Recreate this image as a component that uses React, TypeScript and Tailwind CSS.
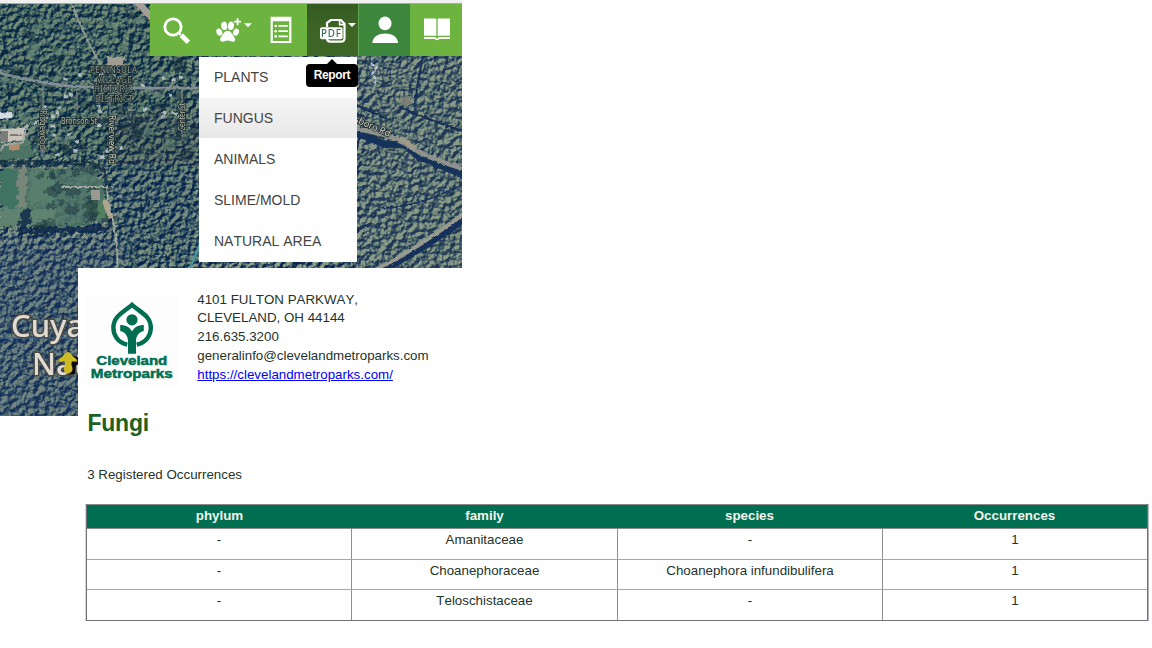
import React from "react";

const menuItems = ["PLANTS", "FUNGUS", "ANIMALS", "SLIME/MOLD", "NATURAL AREA"];
const columns = ["phylum", "family", "species", "Occurrences"];
const rows = [
  ["-", "Amanitaceae", "-", "1"],
  ["-", "Choanephoraceae", "Choanephora infundibulifera", "1"],
  ["-", "Teloschistaceae", "-", "1"],
];

// Deterministic scatter used for houses and clearings in the village.
function scatter(count: number, x: number, y: number, w: number, h: number, seed: number) {
  let s = seed;
  const next = () => {
    s = (s * 16807) % 2147483647;
    return s / 2147483647;
  };
  return Array.from({ length: count }, () => ({ x: x + next() * w, y: y + next() * h, r: next() }));
}

const houses = [...scatter(52, 25, 66, 165, 60, 7731), ...scatter(16, 35, 116, 95, 45, 51200)];
const clearings = [...scatter(20, 30, 20, 110, 50, 9177), ...scatter(34, 0, 75, 190, 75, 34521)];
const groves = [...scatter(46, 0, 10, 196, 150, 23019), ...scatter(26, 40, 165, 70, 68, 88123)];

function AerialMap() {
  return (
    <svg className="absolute left-0 top-1" width="462" height="412" viewBox="0 4 462 412">
      <defs>
        <filter id="forest" x="0" y="0" width="100%" height="100%" colorInterpolationFilters="sRGB">
          <feTurbulence type="fractalNoise" baseFrequency="0.19" numOctaves="5" seed="8" />
          <feDiffuseLighting surfaceScale="5.5" diffuseConstant="1.04" lightingColor="#fff">
            <feDistantLight azimuth="230" elevation="45" />
          </feDiffuseLighting>
          <feComponentTransfer>
            <feFuncR type="table" tableValues=".04 .09 .18 .27 .40 .58" />
            <feFuncG type="table" tableValues=".14 .20 .29 .38 .49 .64" />
            <feFuncB type="table" tableValues=".30 .33 .38 .42 .46 .55" />
          </feComponentTransfer>
        </filter>
        <filter id="grain" x="0" y="0" width="100%" height="100%" colorInterpolationFilters="sRGB">
          <feTurbulence type="fractalNoise" baseFrequency="0.2" numOctaves="3" seed="21" result="n" />
          <feDisplacementMap in="SourceGraphic" in2="n" scale="10" xChannelSelector="R" yChannelSelector="G" />
          <feGaussianBlur stdDeviation="0.6" />
        </filter>
        <filter id="rough" filterUnits="userSpaceOnUse" x="0" y="0" width="462" height="416" colorInterpolationFilters="sRGB">
          <feTurbulence type="fractalNoise" baseFrequency="0.3" numOctaves="2" seed="4" result="n" />
          <feDisplacementMap in="SourceGraphic" in2="n" scale="3" xChannelSelector="R" yChannelSelector="G" />
          <feGaussianBlur stdDeviation="0.35" />
        </filter>
        <filter id="shade" x="-20%" y="-20%" width="140%" height="140%">
          <feGaussianBlur stdDeviation="9" />
        </filter>
      </defs>
      <rect y="4" width="462" height="412" filter="url(#forest)" />
      <g filter="url(#shade)">
        <path d="M-20 -10H200V165H-20Z" fill="#17302a" opacity=".2" />
        <path d="M110 110H200V270H110Z" fill="#12304c" opacity=".16" />
        <path d="M-20 240H120V440H-20Z" fill="#2a4a72" opacity=".3" />
        <path d="M357 56H480V280H357Z" fill="#748278" opacity=".2" />
      </g>
      <g filter="url(#grain)">
        <path d="M0 168H92L108 188V222L62 228 0 226Z" fill="#4f7568" opacity=".88" />
        <path d="M0 168H17V208H0Z" fill="#417362" />
        <path d="M19 168H26V208H17Z" fill="#768678" />
        <path d="M31 170H55V204H29Z" fill="#587f6d" />
        <path d="M0 209H52L58 226H0Z" fill="#5f836f" />
        <path d="M82 202 104 199 108 216 92 220Z" fill="#548062" />
        <path d="M0 142 28 137 34 157 0 160Z" fill="#4c7363" />
        {clearings.map((p, i) => (
          <ellipse key={i} cx={p.x} cy={p.y} rx={2 + p.r * 4} ry={2 + p.r * 2.5} fill="#628472" opacity=".55" />
        ))}
        {groves.map((p, i) => (
          <ellipse key={i} cx={p.x} cy={p.y} rx={3 + p.r * 5} ry={3 + p.r * 3} fill="#142d3c" opacity=".45" />
        ))}
        <path d="M22 210 32 208 28 230 60 226 108 226V233H22L18 228Z" fill="#102c4c" opacity=".85" />
        <path d="M0 163H95L105 172 108 192" fill="none" stroke="#163246" strokeWidth="4" opacity=".8" />
      </g>
      <g filter="url(#rough)">
        {houses.map((p, i) => (
          <rect
            key={i}
            x={p.x}
            y={p.y}
            width={1.8 + p.r * 2.5}
            height={1.8 + p.r * 1.8}
            fill={p.r > 0.4 ? "#c3c9cf" : "#968c8e"}
            opacity=".85"
          />
        ))}
      </g>
      <g fill="none" strokeLinecap="round" filter="url(#rough)">
        <path d="M0 73Q30 81 60 85T197 88" stroke="#838f94" strokeWidth="2.8" />
        <path d="M72 4Q86 42 103 68" stroke="#919b96" strokeWidth="2" />
        <path d="M43 86V156M77 88V110M110 94V114M182 88V136" stroke="#79817f" strokeWidth="1.4" />
        <path d="M62 187H107L108 201Q119 238 117 266" stroke="#a7aba3" strokeWidth="1.8" />
        <path d="M105 202 110 216" stroke="#afa78d" strokeWidth="5" />
        <path d="M0 168H68" stroke="#89927e" strokeWidth="1" />
        <path d="M139 4 151 17" stroke="#a59d98" strokeWidth="7" />
        <path d="M354 132 385 144 405 145 419 157 462 174" stroke="#15325a" strokeWidth="7" />
        <path d="M354 128 385 135Q400 140 414 149T464 169" stroke="#8f928c" strokeWidth="4.5" />
        <path d="M402 139 413 147" stroke="#a19c8a" strokeWidth="5" />
        <path d="M400 107Q425 119 463 131M423 56Q418 80 415 102M356 105 390 120" stroke="#152f57" strokeWidth="2" />
        <path d="M383 270Q420 251 463 221" stroke="#15305a" strokeWidth="6" />
        <path d="M374 271Q420 247 463 214" stroke="#979a8e" strokeWidth="4" />
        <path d="M382 208Q420 207 463 184" stroke="#18335b" strokeWidth="1.6" />
      </g>
      <g fill="none">
        <path d="M0 338H78" stroke="#3d638f" strokeWidth="2" opacity=".65" />
        <path
          d="M134 268Q132 255 147 250 154 236 166 241 173 248 169 268M146 268Q149 252 166 256"
          stroke="#a3ad69"
          strokeDasharray="2 2"
          opacity=".8"
        />
        <path d="M190 268 200 244" stroke="#4796a0" strokeWidth="2.5" />
      </g>
      <g filter="url(#rough)">
        <ellipse cx="406" cy="101" rx="6.5" ry="4.5" fill="#858575" opacity=".85" />
        <path d="M371 64 377 67 372 74 377 80 373 84" fill="none" stroke="#bdc9de" strokeWidth="2" strokeDasharray="4 2" />
        <path d="M107 57H125L122 66H108Z" fill="#a09d95" />
        <path d="M0 129 24 128 25 140 0 143Z" fill="#c8c4bc" />
        <path d="M0 131H8V142H0ZM10 134H22V136H10Z" fill="#7d7c7b" />
        <path d="M0 113 12 112 13 118 0 119Z" fill="#d4dbe2" />
        <path d="M24 128 28 124 22 143 4 145 0 151" fill="none" stroke="#a5aaa5" strokeWidth="2" />
        <path d="M9 145 20 144 19 150 9 150Z" fill="#ad8d6d" />
        <path d="M91 190H100V200H91Z" fill="#9b9990" />
      </g>
      <g
        fontFamily="'Noto Sans', sans-serif"
        stroke="#1c2927"
        strokeWidth="1.6"
        paintOrder="stroke"
        fill="#b3b8af"
        fontSize="8"
      >
        <text x="90" y="73" textLength="47" fill="#8a9294">PENINSULA</text>
        <text x="97" y="83" textLength="35" fill="#8a9294">VILLAGE</text>
        <text x="94" y="92" textLength="39" fill="#8a9294">HISTORIC</text>
        <text x="95" y="102" textLength="38" fill="#8a9294">DISTRICT</text>
        <text x="61" y="124" textLength="36" lengthAdjust="spacingAndGlyphs">Bronson St</text>
        <text transform="translate(40 110) rotate(90)" textLength="39" lengthAdjust="spacingAndGlyphs">Ridgewood</text>
        <text transform="translate(108.5 115) rotate(90)" textLength="49" lengthAdjust="spacingAndGlyphs" fontSize="9" fill="#cfd2c8">
          Riverview Rd
        </text>
        <text transform="translate(185 131) rotate(-90)" textLength="28" lengthAdjust="spacingAndGlyphs">Center St</text>
        <text transform="translate(344 117) rotate(24)" textLength="49" lengthAdjust="spacingAndGlyphs" fontSize="9.5" fill="#d2d3c9">
          nesboro Rd
        </text>
      </g>
      <g
        fontFamily="'Noto Sans', sans-serif"
        fontSize="31"
        fontWeight="500"
        fill="#e0dbd3"
        stroke="#4c4b43"
        strokeWidth="3"
        paintOrder="stroke"
      >
        <text x="11" y="337">Cuyahoga</text>
        <text x="32" y="375">National</text>
      </g>
      <path d="M66 370 69 375 75 374 75.5 366 80 363V358L72 355Z" fill="#090b0d" />
      <path
        d="M58 361.5Q58.5 358.5 61.5 357.3L65.5 353.2Q67.7 350.8 70 353.2L74 357.3Q77 358.5 77.5 361.5ZM64.6 361H71.8L71.4 365Q73.4 368.5 71.8 371.5 68 375.8 64.2 371.5 63 368.5 65 365Z"
        fill="#cdbb25"
      />
    </svg>
  );
}

const Caret = ({ x, y }: { x: number; y: number }) => <path d={`M${x} ${y}h8l-4 4z`} fill="#fff" />;

function Toolbar() {
  const svg = "block h-[52px] w-[52px]";
  return (
    <nav className="flex h-[52px] w-[312px]">
      <button className="bg-[#6cb33f]">
        <svg className={svg} viewBox="0 0 52 52">
          <circle cx="23" cy="23" r="8.2" fill="none" stroke="#fff" strokeWidth="2.8" />
          <path d="m28.9 29 2 2" stroke="#fff" strokeWidth="2" />
          <path d="m31.3 31.3 7.1 7" stroke="#fff" strokeWidth="4.8" />
        </svg>
      </button>
      <button className="bg-[#6cb33f]">
        <svg className={svg} viewBox="0 0 52 52">
          <path d="M.5 0V52" stroke="#68ad3d" />
          <g fill="#fff">
            <ellipse cx="17.3" cy="28.2" rx="2.8" ry="3.7" transform="rotate(-25 17.3 28.2)" />
            <ellipse cx="22.2" cy="21.8" rx="3" ry="4.2" transform="rotate(-8 22.2 21.8)" />
            <ellipse cx="29" cy="21.8" rx="3" ry="4.2" transform="rotate(8 29 21.8)" />
            <ellipse cx="34" cy="28.2" rx="2.8" ry="3.7" transform="rotate(25 34 28.2)" />
            <path d="M25.6 26.8C29.2 26.8 30.8 31 32.3 33.2 34.9 37.5 31 38.3 28.8 37.3 26.6 36.3 24.6 36.3 22.4 37.3 20 38.3 16.5 37 19 33.3 20.5 31 22 26.8 25.6 26.8Z" />
          </g>
          <path d="M35.6 14.2v7M32.1 17.7h7" stroke="#fff" strokeWidth="1.8" />
          <Caret x={42} y={19.2} />
        </svg>
      </button>
      <button className="bg-[#6cb33f]">
        <svg className={svg} viewBox="0 0 52 52">
          <path fill="#fff" fillRule="evenodd" d="M16.6 12.8H37.4V39H16.6ZM18.8 17.2V37H35.2V17.2Z" />
          <g fill="#fff">
            <circle cx="21.7" cy="22" r="1.3" />
            <circle cx="21.7" cy="27.2" r="1.3" />
            <circle cx="21.7" cy="32.4" r="1.3" />
            <path d="M24.4 21h9.4v1.8h-9.4zM24.4 26.2h9.4V28h-9.4zM24.4 31.4h9.4v1.8h-9.4z" />
          </g>
        </svg>
      </button>
      <button className="bg-linear-to-b from-[#355a22] via-[#3d6626] to-[#3d6626]">
        <svg className={svg} viewBox="0 0 52 52">
          <path d="M.5 0V52" stroke="#6cb33f" />
          <path
            d="M21 23v-4.2L24.8 16H34.8L38.5 19.6V34Q38.5 37.7 35 37.7H24.3Q21 37.7 21 34.3"
            fill="none"
            stroke="#fff"
            strokeWidth="2.2"
          />
          <path d="M33.6 15.4V20.6H39" fill="none" stroke="#fff" strokeWidth="1.6" />
          <rect x="14" y="23.3" width="22.6" height="12" rx="1.8" fill="#fff" />
          <text x="15" y="33" fontFamily="'Noto Sans', sans-serif" fontSize="9.8" fontWeight="500" textLength="20" fill="#3d6a5a">
            PDF
          </text>
          <Caret x={42} y={19} />
        </svg>
      </button>
      <button className="bg-[#3c873b]">
        <svg className={svg} viewBox="0 0 52 52">
          <path d="M.5 0V52" stroke="#62a552" />
          <ellipse cx="27" cy="19.4" rx="6.5" ry="6.9" fill="#fff" />
          <path d="M14.2 39C15 32.5 20.5 29.6 27.2 29.6S39.2 32.5 40.2 39Z" fill="#fff" />
        </svg>
      </button>
      <button className="bg-[#6cb33f]">
        <svg className={svg} viewBox="0 0 52 52">
          <path d="M14 14.4H25.5L26.3 15V31.8H14ZM27.7 15 28.5 14.4H40V31.8H27.7Z" fill="#fff" />
          <path d="M14 34H24.8Q27 36.7 29.2 34H40" fill="none" stroke="#fff" strokeWidth="1.8" />
          <path d="M26.3 15H27.7V32H26.3Z" fill="#a5d07e" />
        </svg>
      </button>
    </nav>
  );
}

function Logo() {
  return (
    <svg className="block h-[92px] w-[92px] bg-[#fdfdfd]" viewBox="86 295 92 92">
      <path
        d="M127.3 344.6C118 342.5 113.4 335.5 113.4 327.8 113.4 316 123.5 312.5 132 304.8 140.5 312.5 150.8 316 150.8 327.8 150.8 335.5 146 342.5 136.7 344.6"
        fill="none"
        stroke="#006f51"
        strokeWidth="4.4"
      />
      <circle cx="132" cy="319.8" r="5.6" fill="#006f51" />
      <path
        d="M120.2 325C126 325 130.3 327.6 132 331.6 133.7 327.6 138 325 143.8 325V331C139 332 136 336 136 341V353.7H128V341C128 336 125 332 120.2 331Z"
        fill="#006f51"
      />
      <g
        fontFamily="'Liberation Sans', Arial, sans-serif"
        fontWeight="700"
        fontSize="13.2"
        fill="#006f51"
        stroke="#006f51"
        strokeWidth=".5"
      >
        <text x="96.3" y="365.3" textLength="71" lengthAdjust="spacingAndGlyphs">Cleveland</text>
        <text x="90.8" y="378.1" textLength="82" lengthAdjust="spacingAndGlyphs">Metroparks</text>
      </g>
    </svg>
  );
}

export default function App() {
  return (
    <div className="relative h-[648px] w-[1152px] overflow-hidden bg-white font-['Liberation_Sans',Arial,sans-serif]">
      <AerialMap />
      <div className="relative flex h-[268px] w-[462px] flex-col">
        <div className="h-1 shrink-0 border-b border-[#aaa] bg-[#f0f0f0]" />
        <div className="flex justify-end">
          <Toolbar />
        </div>
        <div className="ml-[199px] mt-px h-[205px] w-[158px] bg-white text-[14px] text-[#444] [font-kerning:none]">
          {menuItems.map((item) => (
            <div
              key={item}
              className={
                item === "FUNGUS"
                  ? "flex h-[41px] items-center border-b border-white bg-linear-to-b from-[#f5f5f5] to-[#e8e8e8] bg-clip-padding pl-[15px]"
                  : "flex h-[41px] items-center pl-[15px]"
              }
            >
              {item}
            </div>
          ))}
        </div>
        <div className="absolute left-[306px] top-[59px] flex w-[52px] flex-col items-center">
          <div className="h-0 w-0 border-x-[5px] border-b-[5px] border-x-transparent border-b-black" />
          <div className="flex h-[23px] w-full items-center justify-center rounded bg-black pb-[2px] text-[12px] font-bold tracking-[-0.35px] text-white">
            Report
          </div>
        </div>
      </div>

      <main className="relative ml-[78px] h-[380px] bg-white text-[13.33px] text-[#24332a] [font-kerning:none]">
        <header className="flex pl-2 pt-[27px]">
          <Logo />
          <address className="ml-[19.3px] -mt-[4.3px] text-[13.33px] not-italic leading-[18.75px]">
            <div>4101 FULTON PARKWAY,</div>
            <div>CLEVELAND, OH 44144</div>
            <div>216.635.3200</div>
            <div>generalinfo@clevelandmetroparks.com</div>
            <a className="text-[#0000ff] underline" href="#site">https://clevelandmetroparks.com/</a>
          </address>
        </header>
        <h1 className="ml-[9.4px] mt-[22px] text-[23px] font-bold leading-[28px] tracking-[-0.2px] text-[#21611f]">Fungi</h1>
        <p className="ml-[9.2px] mt-[29px] leading-[18px]">3 Registered Occurrences</p>
        <section className="ml-2 mt-[20px] w-[1062px] border-x border-b border-[#71717b] shadow-[-1px_0_0_#d4d4da,1px_0_0_#b4b4be]">
          <div className="grid h-[25px] grid-cols-4 border-y border-[#8a8a8a] bg-[#006f51] text-center font-bold leading-[22px] text-[#f2f5ee]">
            {columns.map((c) => (
              <div key={c}>{c}</div>
            ))}
          </div>
          {rows.map((row, i) => (
            <div
              key={i}
              className="grid h-[30.5px] grid-cols-[265px_266px_265px_264px] divide-x divide-[#8f8f8f] border-b border-[#a5a5a5] text-center leading-[22px] last:h-[30px] last:border-b-0"
            >
              {row.map((cell, j) => (
                <div key={j}>{cell}</div>
              ))}
            </div>
          ))}
        </section>
      </main>
    </div>
  );
}
